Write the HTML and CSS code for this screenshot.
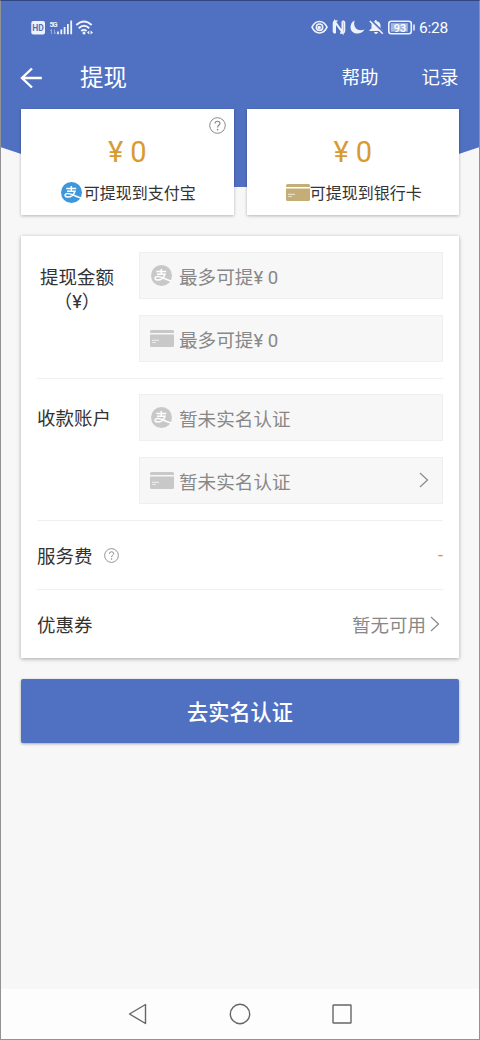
FILE: index.html
```html
<!DOCTYPE html>
<html lang="zh-CN">
<head>
<meta charset="utf-8">
<title>提现</title>
<link rel="stylesheet" href="styles.css">
</head>
<body>
<svg class="defs" width="0" height="0">
  <symbol id="alipay" viewBox="0 0 21 21">
    <circle cx="10.500" cy="10.500" r="10.500" fill="currentColor"/>
    <path d="M5.300 6.500H15.200M10.300 4V9M6 9.200H14C13 12 10.500 15 6.800 15C4 15 3.300 13 4.700 12C6.400 10.700 9 11.500 12 12.900C14.500 14 17 15.200 20.200 15.900" fill="none" stroke="#fff" stroke-width="1.500"/>
  </symbol>
  <symbol id="card" viewBox="0 0 24 17">
    <path d="M0 3V1.500Q0 0 1.500 0H22.500Q24 0 24 1.500V3ZM0 4.500H24V15.500Q24 17 22.500 17H1.500Q0 17 0 15.500Z" fill="currentColor"/>
    <path d="M2 10.300H9M2 12.500H6" stroke="#fff" stroke-width="1.200" opacity=".6"/>
  </symbol>
  <symbol id="help" viewBox="0 0 17 17">
    <circle cx="8.500" cy="8.500" r="7.800" fill="none" stroke="currentColor"/>
    <path d="M6 6.600Q6.100 4.300 8.500 4.300T11 6.400C11 8 8.600 8.100 8.600 10.400" fill="none" stroke="currentColor" stroke-width="1.100"/>
    <circle cx="8.600" cy="12.600" r=".85" fill="currentColor"/>
  </symbol>
  <symbol id="chevron" viewBox="0 0 10 16">
    <path d="M1 1L8.500 8L1 15" fill="none" stroke="currentColor" stroke-width="1.200"/>
  </symbol>
</svg>
<div class="screen">
  <header class="header">
    <div class="status">
      <svg class="status-left" viewBox="0 0 66 20" width="66" height="20">
        <rect x="1.300" y="4" width="13.700" height="13.500" rx="2" fill="#eef2fc"/>
        <text x="2.200" y="13.800" class="hd">HD</text>
        <text x="19.500" y="9.800" class="five-g" textLength="8">5G</text>
        <path d="M21.500 12.500V17M20.300 14L21.500 12.500M24.500 12.500V17M24.500 17L25.700 15.500" stroke="#b5c3e8" stroke-width=".7"/>
        <path d="M28 14.500V17.300M31.300 12.500V17.300M34.600 10V17.300M37.900 7V17.300M41.200 3.500V17.300" stroke="#eef2fc" stroke-width="1.800"/>
        <g fill="none" stroke="#eef2fc" stroke-width="1.900"><path d="M46.300 8Q54 1 61.700 8M48.700 11.200Q54 6.200 59.300 11.200M51.200 14Q54 11.500 56.600 14"/></g>
        <circle cx="54" cy="16" r="1.500" fill="#eef2fc"/>
        <path d="M59.300 13.500V17.500L57 15.500ZM60.600 13.500V17.500L63 15.500Z" fill="#eef2fc"/>
      </svg>
      <div class="status-right">
        <svg viewBox="0 0 104 20" width="104" height="20">
          <g fill="none" stroke="#eef2fc" stroke-width="1.600">
            <path d="M1 10.200C4.500 2.500 12.500 2.500 16 10.200C12.500 17.900 4.500 17.900 1 10.200Z"/><circle cx="8.500" cy="10.200" r="3.200"/>
            <rect x="77.800" y="4.200" width="22.500" height="12.500" rx="2.500"/>
          </g>
          <circle cx="8.200" cy="10.500" r="1.700" fill="#eef2fc"/>
          <g fill="none" stroke="#eef2fc">
            <path d="M24 16V4.800L31.500 15.300V4.200" stroke-width="2"/>
            <path d="M26.500 4H25Q22.500 4 22.500 6.500V14Q22.500 16 24.500 16M29 16H31Q33.500 16 33.500 13.500V6Q33.500 4 31.500 4" stroke-width="1.600"/>
          </g>
          <path d="M43.700 3.400C41.500 9 46 15.200 53.500 12.500C50.500 18.500 40 18 39.500 10.500C39.400 7 41 4.500 43.700 3.400Z" fill="#eef2fc"/>
          <path d="M58.500 14V13L60.500 11.500V8Q60.500 4.500 64 4.200V3H65.500V4.200Q69.500 5 69.500 8.500V11.500L71.500 13V14ZM63 15H67Q66.500 17 65 17T63 15Z" fill="#eef2fc"/>
          <path d="M60 3.200L73 16" stroke="#5070c1" stroke-width="2"/>
          <path d="M58.800 4L71.800 16.700" stroke="#eef2fc" stroke-width="1.600"/>
          <rect x="79.800" y="6.200" width="17" height="8.500" fill="#a7b7e0"/>
          <path d="M103 7.500V13.500" stroke="#eef2fc" stroke-width="1.500"/>
          <text x="82.700" y="14.500" class="battery">93</text>
        </svg>
        <span class="clock">6:28</span>
      </div>
    </div>
    <nav class="nav">
      <svg class="back" viewBox="0 0 22 22" width="22" height="22"><path d="M12 1.500L2 11L12 20.500M2 11H21.800" fill="none" stroke="#fff" stroke-width="2.400"/></svg>
      <h1 class="title">提现</h1>
      <span class="link">帮助</span>
      <span class="link">记录</span>
    </nav>
  </header>
  <main class="content">
    <section class="balances">
      <div class="balance">
        <svg class="balance-help"><use href="#help"/></svg>
        <div class="amount">¥ 0</div>
        <div class="method"><svg class="alipay blue"><use href="#alipay"/></svg><span>可提现到支付宝</span></div>
      </div>
      <div class="balance">
        <div class="amount">¥ 0</div>
        <div class="method"><svg class="card gold"><use href="#card"/></svg><span>可提现到银行卡</span></div>
      </div>
    </section>
    <section class="form">
      <div class="group first">
        <div class="label centered">提现金额<br>（¥）</div>
        <div class="fields">
          <div class="field"><svg class="alipay"><use href="#alipay"/></svg><span>最多可提¥ 0</span></div>
          <div class="field"><svg class="card"><use href="#card"/></svg><span>最多可提¥ 0</span></div>
        </div>
      </div>
      <div class="group">
        <div class="label">收款账户</div>
        <div class="fields">
          <div class="field"><svg class="alipay"><use href="#alipay"/></svg><span>暂未实名认证</span></div>
          <div class="field"><svg class="card"><use href="#card"/></svg><span>暂未实名认证</span><svg class="chevron"><use href="#chevron"/></svg></div>
        </div>
      </div>
      <div class="row"><span>服务费</span><svg class="fee-help"><use href="#help"/></svg><span class="fee">-</span></div>
      <div class="row"><span>优惠券</span><span class="coupon">暂无可用</span><svg class="chevron"><use href="#chevron"/></svg></div>
    </section>
    <button class="submit">去实名认证</button>
  </main>
  <footer class="system">
    <svg viewBox="0 0 20 22" width="20" height="22"><path d="M1.500 11L17.500 1.500V20.500Z" stroke-linejoin="round"/></svg>
    <svg viewBox="0 0 22 22" width="22" height="22"><circle cx="11" cy="11" r="9.700"/></svg>
    <svg viewBox="0 0 20 20" width="20" height="20"><rect x="1" y="1" width="18" height="18" rx=".5"/></svg>
  </footer>
</div>
</body>
</html>
```
FILE: styles.css
```css
* { box-sizing: border-box; }
body { margin: 0; font-family: Roboto, "Noto Sans CJK SC", sans-serif; color: #333; }
svg { flex: none; display: block; }
.defs { position: absolute; }
.screen {
  width: 480px; height: 1040px; display: flex; flex-direction: column;
  border: 1px solid #929294; border-top-color: #324782; background: #f7f7f7; overflow: hidden;
}
.header {
  height: 187px; margin: -1px -1px 0; flex: none; background: #5070c1;
  clip-path: polygon(0 0, 100% 0, 100% 147px, 75% 100%, 25% 100%, 0 147px);
  border: 1px solid #3c5594; border-bottom: 0; color: #fff;
}
.status { height: 36px; padding: 16px 0 0 29px; display: flex; justify-content: space-between; }
.status-right { display: flex; padding-right: 30px; gap: 4px; }
.clock { font-size: 15.500px; line-height: 22px; letter-spacing: -.2px; width: 30px; white-space: nowrap; }
.hd { font: 700 8.500px Roboto, sans-serif; fill: #5070c1; }
.five-g { font: 700 7.500px Roboto, sans-serif; fill: #eef2fc; }
.battery { font: 500 11px Roboto, sans-serif; fill: #fff; }
.nav { height: 74px; padding: 7px 20px 0 19px; display: flex; align-items: center; }
.title { margin: 0 auto 0 38px; font-size: 23.500px; font-weight: 400; line-height: 34px; }
.link { font-size: 18.500px; line-height: 28px; margin-left: 43px; position: relative; left: -.5px; top: .5px; }
.content { margin-top: -78px; padding: 0 20px; flex: 1; }
.balances { display: grid; grid-template-columns: 212.500px 212.500px; gap: 13px; position: relative; }
.balance { height: 106px; background: #fff; position: relative; box-shadow: 0 1px 3px #0004; display: flex; flex-direction: column; align-items: center; }
.balance-help { position: absolute; right: 8px; top: 8px; width: 17px; height: 17px; color: #888; }
.amount { margin-top: 24px; font-size: 29px; line-height: 38px; color: #d89b31; }
.method { margin-top: 8px; padding-left: 2px; height: 26px; display: flex; align-items: center; gap: 2px; font-size: 16px; }
.method .card + span { margin-left: -2px; }
.alipay { width: 21px; height: 21px; }
.card { width: 24px; height: 17px; }
.blue { color: #3d97dc; }
.gold { color: #c4ad76; }
.form { margin-top: 21px; height: 422px; padding: 0 16px; background: #fff; box-shadow: 0 1px 4px #0005; }
.group { height: 142px; padding-top: 15px; border-bottom: 1px solid #f0f0f0; display: flex; }
.group.first { height: 143px; padding-top: 16px; }
.label { width: 102px; padding-top: 13px; font-size: 18.500px; line-height: 24px; }
.centered { padding: 14px 22px 0 0; text-align: center; white-space: nowrap; }
.fields { flex: 1; display: flex; flex-direction: column; gap: 16px; }
.field { height: 47px; padding: 0 13px 1px 10px; background: #f7f7f7; border: 1px solid #efefef; display: flex; align-items: center; font-size: 18.600px; color: #888; }
.field .alipay, .field .card { color: #c8c8c8; margin-right: 5px; }
.field .alipay { margin-left: 1px; margin-right: 7px; }
.chevron { width: 10px; height: 16px; color: #888; margin-left: auto; }
.row { height: 69px; display: flex; align-items: center; font-size: 18.500px; border-bottom: 1px solid #f0f0f0; }
.row:last-child { border: 0; padding-bottom: 2px; }
.fee-help { width: 15px; height: 15px; color: #888; margin-left: 11px; }
.fee { margin-left: auto; color: #d89b31; }
.coupon { margin-left: auto; color: #888; }
.row .chevron { margin: 0 3px 0 4px; }
.submit { display: block; width: 100%; height: 64px; margin-top: 21px; padding: 0 0 2px; border: 0; border-radius: 2px; background: #5070c1; color: #fff; font: 500 21.200px Roboto, "Noto Sans CJK SC", sans-serif; box-shadow: 0 1px 3px #0005; }
.system { height: 50px; background: #fdfdfd; display: flex; align-items: center; justify-content: center; gap: 81px; }
.system svg { fill: none; stroke: #666; stroke-width: 1.400; }
```
